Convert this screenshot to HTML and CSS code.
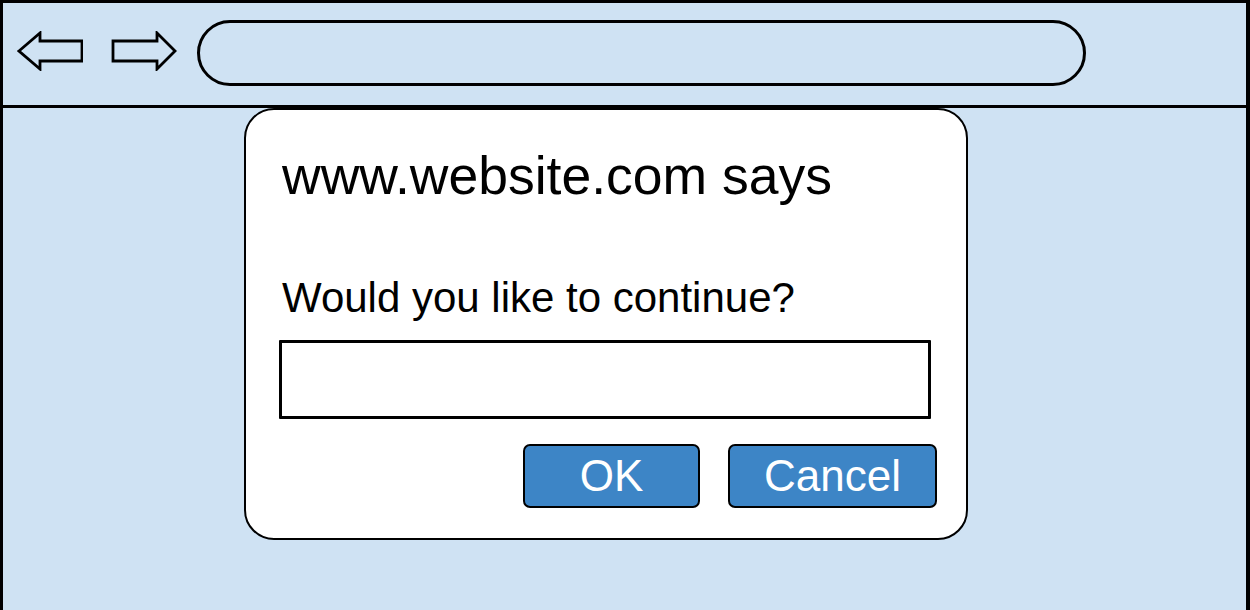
FILE: index.html
```html
<!DOCTYPE html>
<html lang="en">
<head>
  <meta charset="UTF-8" />
  <title>Confirm dialog</title>
  <link rel="stylesheet" href="styles.css">
</head>
<body>
  <div class="window">
    <div class="toolbar">
      <!-- back / forward arrows -->
      <svg class="nav-arrow" width="66" height="40" viewBox="0 0 66 40">
        <path d="M2 20 L23 2 L23 10 L65 10 L65 30 L23 30 L23 38 Z" />
      </svg>
      <svg class="nav-arrow forward" width="66" height="40" viewBox="0 0 66 40">
        <path d="M2 10 L46 10 L46 2 L64 20 L46 38 L46 30 L2 30 Z" />
      </svg>
      <div class="address"></div>
    </div>

    <div class="content">
      <div class="dialog">
        <div class="dialog-title">www.website.com says</div>
        <div class="dialog-message">Would you like to continue?</div>
        <div class="dialog-input"></div>
        <div class="dialog-actions">
          <button class="btn btn-ok">OK</button>
          <button class="btn btn-cancel">Cancel</button>
        </div>
      </div>
    </div>
  </div>
</body>
</html>
```

FILE: styles.css
```css
body {
  margin: 0;
  font-family: "Liberation Sans", Arial, sans-serif;
  background-color: #cfe2f3;
}
.window {
  box-sizing: border-box;
  height: 610px;
  border-top: 3px solid #000;
  border-left: 3px solid #000;
  border-right: 4px solid #000;
  background-color: #cfe2f3;
  overflow: hidden;
}
.toolbar {
  display: flex;
  align-items: flex-start;
  height: 105px;
  padding: 17px 0 0 14px;
  box-sizing: border-box;
  border-bottom: 3px solid #000;
}
.nav-arrow {
  margin-top: 11px;
  flex-shrink: 0;
}
.nav-arrow path {
  fill: none;
  stroke: #000;
  stroke-width: 2.8;
  stroke-linejoin: miter;
}
.nav-arrow.forward {
  margin-left: 28px;
}
.address {
  box-sizing: border-box;
  width: 889px;
  height: 66px;
  margin-left: 20px;
  border: 3px solid #000;
  border-radius: 33px;
}
.dialog {
  box-sizing: border-box;
  width: 724px;
  height: 432px;
  margin-left: 241px;
  padding: 0 29px 0 33px;
  background-color: #fff;
  border: 2px solid #000;
  border-radius: 30px;
}
.dialog-title {
  margin-top: 39px;
  padding-left: 3px;
  font-size: 53.5px;
  line-height: 1;
  color: #000;
}
.dialog-message {
  margin-top: 74px;
  padding-left: 3px;
  font-size: 42px;
  line-height: 1;
  color: #000;
}
.dialog-input {
  box-sizing: border-box;
  width: 652px;
  height: 79px;
  margin-top: 21px;
  border: 3px solid #000;
  border-radius: 1px;
}
.dialog-actions {
  display: flex;
  justify-content: flex-end;
  gap: 28px;
  margin-top: 25px;
}
.btn {
  box-sizing: border-box;
  height: 64px;
  padding: 0;
  font-family: "Liberation Sans", Arial, sans-serif;
  font-size: 44px;
  line-height: 1;
  color: #fff;
  background-color: #3d85c6;
  border: 2px solid #000;
  border-radius: 7px;
}
.btn-ok {
  width: 177px;
}
.btn-cancel {
  width: 209px;
}
```
